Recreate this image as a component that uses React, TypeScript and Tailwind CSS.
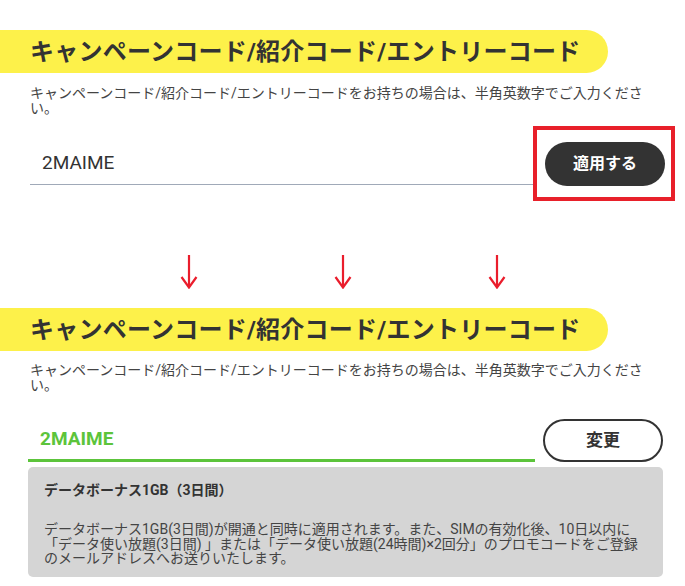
import React from "react";

const title = "キャンペーンコード/紹介コード/エントリーコード";
const lead = "キャンペーンコード/紹介コード/エントリーコードをお持ちの場合は、半角英数字でご入力ください。";

function Banner({ className = "" }: { className?: string }) {
  return (
    <div className={`flex h-[43px] w-[608px] items-center rounded-r-full bg-[#fdf14a] pl-[30px] ${className}`}>
      <h2 className="text-[24px] font-bold leading-none tracking-[0.01em] text-[#333]">{title}</h2>
    </div>
  );
}

function Lead({ className = "" }: { className?: string }) {
  return (
    <p className={`ml-[30px] w-[620px] text-[14px] leading-[14.5px] text-[#444] ${className}`}>{lead}</p>
  );
}

function Arrow() {
  return (
    <svg width="18" height="34" viewBox="0 0 18 34" fill="none" stroke="#ea1d2c" strokeWidth="2.2">
      <path d="M9 0V32" />
      <path d="M1.5 22L9 32.5L16.5 22" />
    </svg>
  );
}

export default function App() {
  return (
    <div
      className="h-[586px] w-[685px] overflow-hidden bg-white text-[#333]"
      style={{ fontFamily: "Roboto, 'Noto Sans CJK JP', sans-serif" }}
    >
      <section className="pt-[30px]">
        <Banner />
        <Lead className="mt-[13px]" />
        <div className="mt-[11px] flex items-center">
          <div className="ml-[30px] flex h-[43px] w-[503px] items-center border-b border-[#a0a9b8] pl-[12px]">
            <span className="text-[19px] text-[#333]">2MAIME</span>
          </div>
          <div className="flex h-[75px] w-[142px] items-center border-4 border-[#e8202a] pl-[8px]">
            <button className="flex h-[44px] w-[120px] items-center justify-center rounded-full bg-[#333] text-[16px] font-bold text-white">
              適用する
            </button>
          </div>
        </div>
      </section>

      <div className="mt-[54px] flex gap-[136px] pl-[180px]">
        <Arrow />
        <Arrow />
        <Arrow />
      </div>

      <section className="mt-[19px]">
        <Banner />
        <Lead className="mt-[12px]" />
        <div className="mt-[27px] flex items-end">
          <div className="ml-[28px] flex h-[43px] w-[507px] items-center border-b-[3px] border-[#5cc43b] pl-[12px]">
            <span className="text-[19px] font-bold text-[#5cc43b]">2MAIME</span>
          </div>
          <button className="ml-[8px] flex h-[43px] w-[120px] items-center justify-center rounded-full border-2 border-[#333] bg-white text-[17px] font-bold text-[#333]">
            変更
          </button>
        </div>
        <div className="ml-[28px] mt-[5px] h-[110px] w-[635px] rounded-[5px] bg-[#d5d5d5] px-[16px] pt-[15px]">
          <p className="text-[14px] font-bold leading-[16px] text-[#333]">データボーナス1GB（3日間）</p>
          <p className="mt-[24px] text-[14px] leading-[14.5px] text-[#444]">
            データボーナス1GB(3日間)が開通と同時に適用されます。また、SIMの有効化後、10日以内に「データ使い放題(3日間) 」または「データ使い放題(24時間)×2回分」のプロモコードをご登録のメールアドレスへお送りいたします。
          </p>
        </div>
      </section>
    </div>
  );
}
